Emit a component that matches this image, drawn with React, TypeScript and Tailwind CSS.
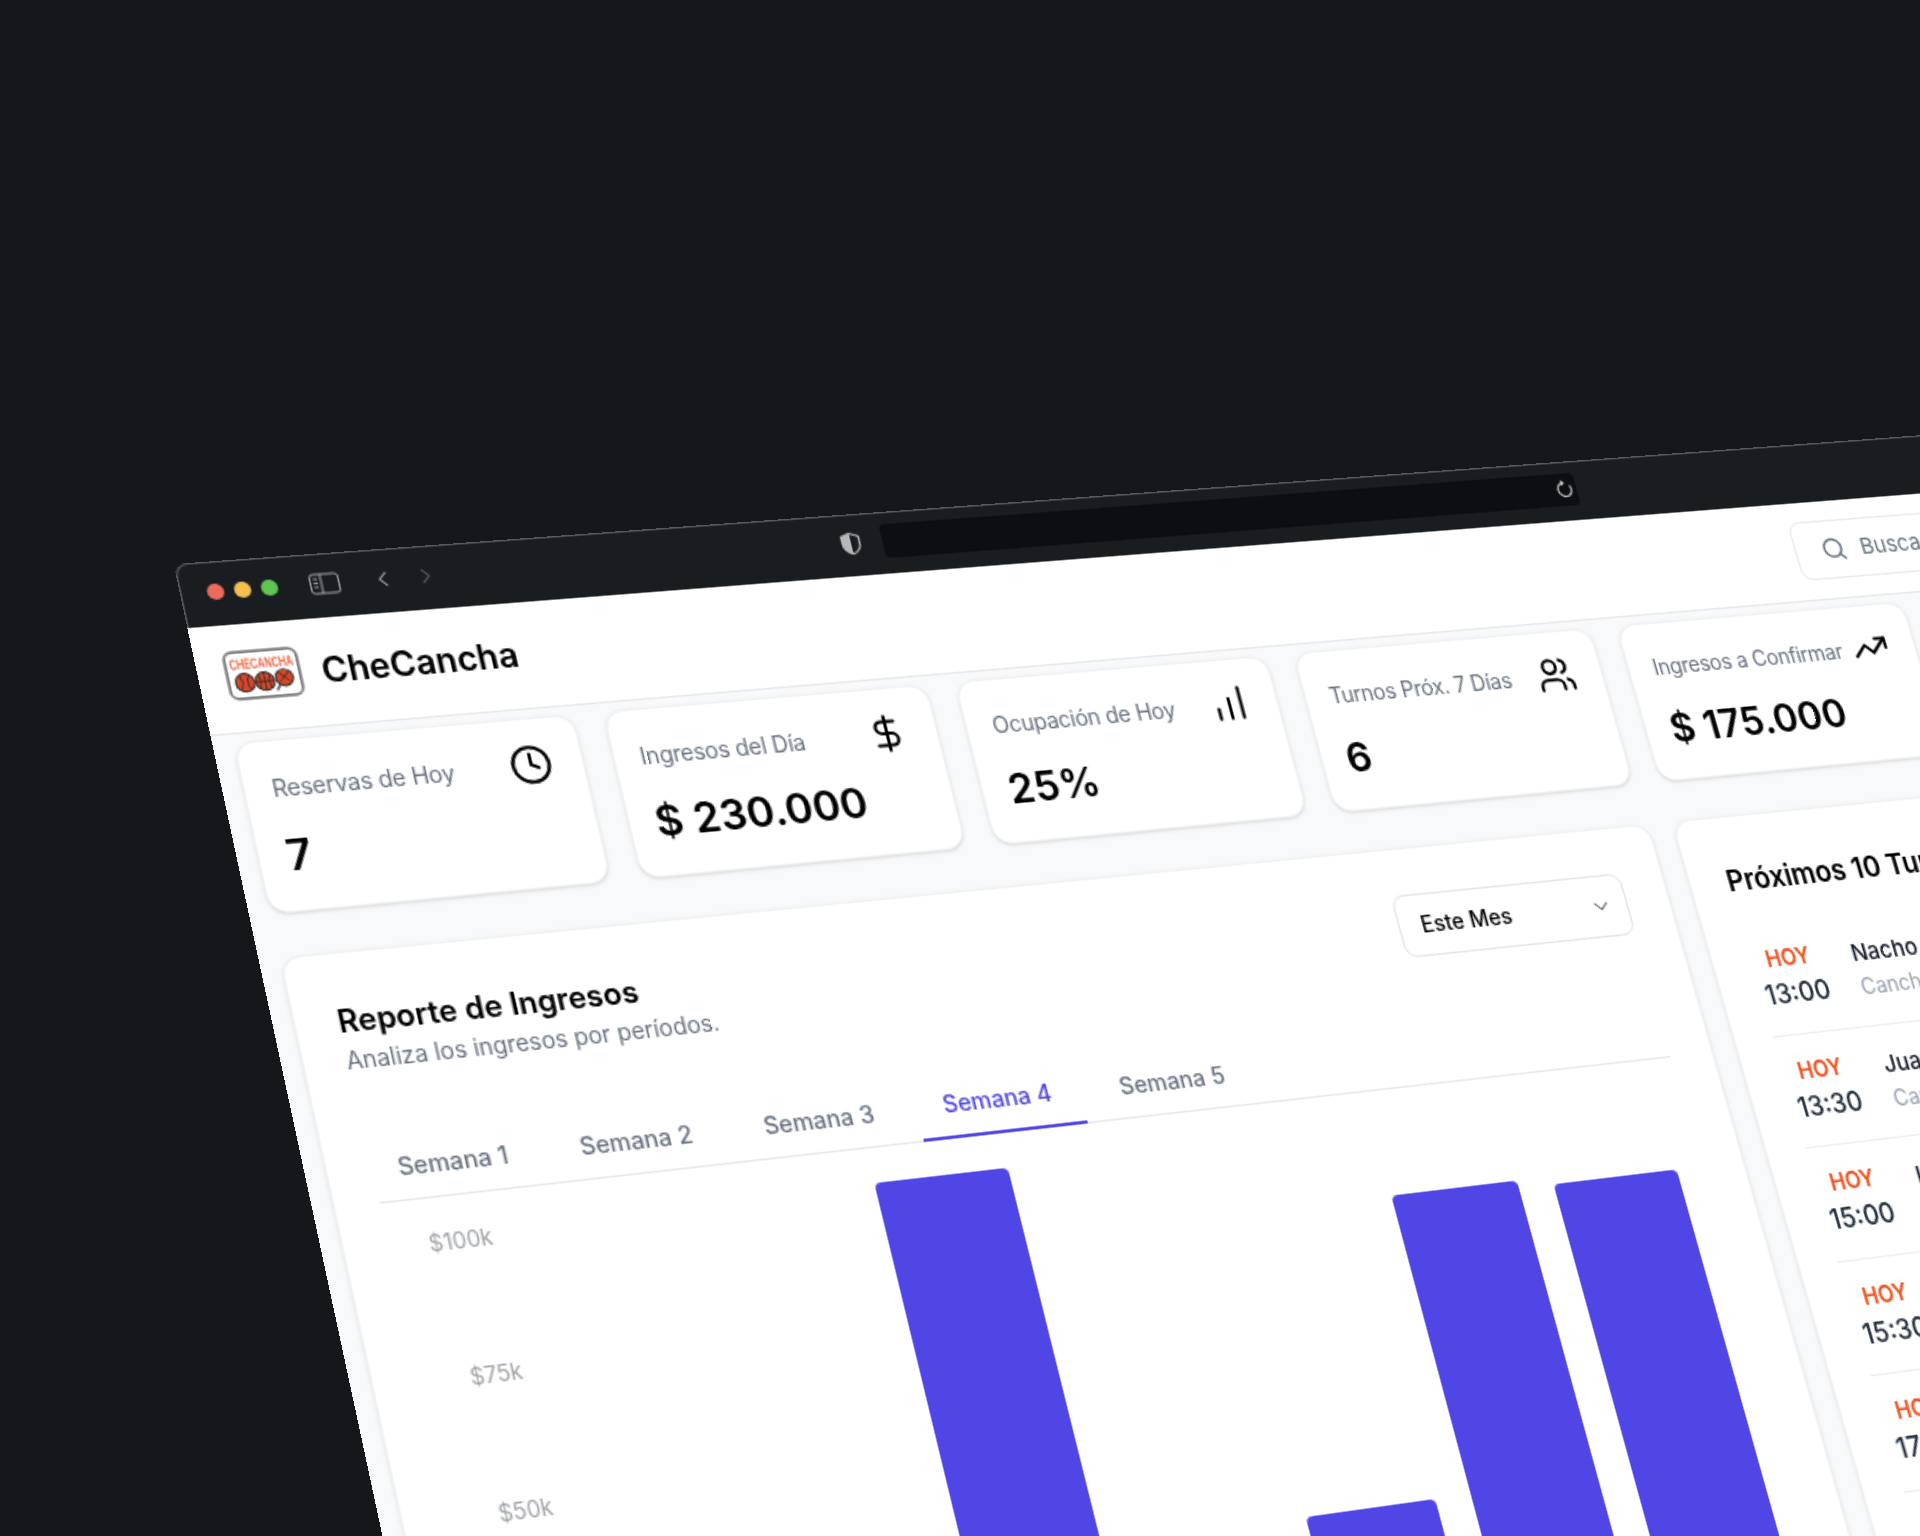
import {
    ChartNoAxesColumnIncreasing,
    ChevronDown,
    ChevronLeft,
    ChevronRight,
    Clock,
    DollarSign,
    Search,
    TrendingUp,
    Users,
} from "lucide-react"

// flat window coordinates -> screenshot coordinates (thumbnail px * 1.2245)
const SCALE = 1920 / 1568
const QUAD = [
    { from: [0, 40], to: [153, 513] },
    { from: [880, 40], to: [1273.6, 425.9] },
    { from: [0, 392], to: [255.1, 988] },
    { from: [880, 392], to: [1396.3, 858.6] },
]

function perspectiveMatrix() {
    const rows: number[][] = []
    QUAD.forEach(({ from: [x, y], to }) => {
        const u = to[0] * SCALE
        const v = to[1] * SCALE
        rows.push([x, y, 1, 0, 0, 0, -u * x, -u * y, u])
        rows.push([0, 0, 0, x, y, 1, -v * x, -v * y, v])
    })
    for (let i = 0; i < 8; i++) {
        let pivot = i
        for (let r = i + 1; r < 8; r++) {
            if (Math.abs(rows[r][i]) > Math.abs(rows[pivot][i])) pivot = r
        }
        ;[rows[i], rows[pivot]] = [rows[pivot], rows[i]]
        for (let r = 0; r < 8; r++) {
            if (r === i) continue
            const k = rows[r][i] / rows[i][i]
            for (let c = i; c < 9; c++) rows[r][c] -= k * rows[i][c]
        }
    }
    const h = rows.map((row, i) => row[8] / row[i])
    return `matrix3d(${h[0]},${h[3]},0,${h[6]},${h[1]},${h[4]},0,${h[7]},0,0,1,0,${h[2]},${h[5]},0,1)`
}

const stats = [
    { label: "Reservas de Hoy", value: "7", icon: Clock },
    { label: "Ingresos del Día", value: "$ 230.000", icon: DollarSign },
    { label: "Ocupación de Hoy", value: "25%", icon: ChartNoAxesColumnIncreasing },
    { label: "Turnos Próx. 7 Días", value: "6", icon: Users },
    { label: "Ingresos a Confirmar", value: "$ 175.000", icon: TrendingUp },
]

const tabs = ["Semana 1", "Semana 2", "Semana 3", "Semana 4", "Semana 5"]
const axis = ["$100k", "$75k", "$50k", "$25k", "$0k"]
const bars = [0, 0, 341, 0, 113, 297, 292]

const turnos = [
    { time: "13:00", name: "Nacho Gómez", court: "Cancha 1" },
    { time: "13:30", name: "Juan Pérez", court: "Cancha 2" },
    { time: "15:00", name: "Lucas Díaz", court: "Cancha 1" },
    { time: "15:30", name: "Martín Ruiz", court: "Cancha 3" },
    { time: "17:00", name: "Pablo Sosa", court: "Cancha 2" },
    { time: "18:00", name: "Diego Paz", court: "Cancha 1" },
]

function Logo() {
    return (
        <svg className="-mt-[3px]" width="45" height="31" viewBox="0 0 48 33">
            <rect x="1.2" y="1.2" width="45.6" height="30.6" rx="5" fill="#fff" stroke="#7c7c7c" strokeWidth="1.8" />
            <text x="24" y="12.5" textAnchor="middle" fontSize="9.5" fontWeight="700" fill="#f1633f" fontFamily="Liberation Sans, sans-serif" textLength="40" lengthAdjust="spacingAndGlyphs">
                CHECANCHA
            </text>
            <circle cx="11.5" cy="21.5" r="6" fill="#d9472a" stroke="#2a2a2a" strokeWidth="1" />
            <path d="M8.5 17c2 3 2 6 0 9M14.5 17c-2 3-2 6 0 9" fill="none" stroke="#2a2a2a" strokeWidth="0.7" />
            <circle cx="24" cy="21.5" r="6" fill="#d9472a" stroke="#2a2a2a" strokeWidth="1" />
            <path d="M24 15.5v12M18 21.5h12M20 17c2 3 2 6 0 9M28 17c-2 3-2 6 0 9" fill="none" stroke="#2a2a2a" strokeWidth="0.7" />
            <circle cx="36.5" cy="20" r="5.5" fill="#d9472a" stroke="#2a2a2a" strokeWidth="1" />
            <path d="M33.5 16.5l6 6M39.5 16.5l-6 6" fill="none" stroke="#2a2a2a" strokeWidth="0.7" />
            <path d="M33 24.5l-2.5 3.5" fill="none" stroke="#555" strokeWidth="1.4" />
        </svg>
    )
}

function BrowserBar() {
    return (
        <div className="flex h-10 items-center rounded-t-[8px] border-l border-t border-[#55585c] bg-[#1a1d20] pb-1 pl-[15px]">
            <div className="flex w-[43px] gap-1.5">
                <span className="h-2.5 w-2.5 rounded-full bg-[#ec6a5e]" />
                <span className="h-2.5 w-2.5 rounded-full bg-[#f4bf4f]" />
                <span className="h-2.5 w-2.5 rounded-full bg-[#61c554]" />
            </div>
            <svg className="ml-[18px]" width="18" height="14" viewBox="0 0 18 14" fill="none" stroke="#9a9da0" strokeWidth="1">
                <rect x="0.5" y="1" width="17" height="12" rx="2" />
                <path d="M7 1v12M2.5 4h2.5M2.5 6.5h2.5M2.5 9h2.5" />
            </svg>
            <ChevronLeft className="ml-[18px] text-[#b4b6b8]" size={16} strokeWidth={1.5} />
            <ChevronRight className="ml-2.5 text-[#64676a]" size={16} strokeWidth={1.5} />
            <svg className="ml-[249px]" width="16" height="16" viewBox="0 0 16 16">
                <path d="M8 1.5l5.5 2v4.5c0 3.4-2.4 5.7-5.5 6.7C4.9 13.7 2.5 11.4 2.5 8V3.5z" fill="none" stroke="#b6b8ba" strokeWidth="1.2" />
                <path d="M8 1.5v13.2C4.9 13.7 2.5 11.4 2.5 8V3.5z" fill="#b6b8ba" />
            </svg>
            <div className="ml-3 flex h-[22px] w-[466px] items-center justify-end rounded-[4px] bg-[#0c0f11] pr-0.5">
                <svg width="13" height="13" viewBox="0 0 13 13" fill="none" stroke="#c5c7c9" strokeWidth="1.1">
                    <path d="M10.6 4.4A4.6 4.6 0 1 1 6.5 2.3" />
                    <path d="M5 .8l1.7 1.5L5 3.8" />
                </svg>
            </div>
        </div>
    )
}

function StatCard({ label, value, icon: Icon }: (typeof stats)[number]) {
    return (
        <div className="h-[105px] rounded-xl border border-[#f0f1f3] bg-white pl-4 pr-[18px] pt-[17px] shadow-sm">
            <div className="flex h-6 items-center justify-between">
                <span className="whitespace-nowrap text-sm tracking-[-0.25px] text-gray-500">{label}</span>
                <Icon className="-mt-[3px] shrink-0 text-black" size={26} strokeWidth={1.9} />
            </div>
            <p className="mt-[13px] text-[26px] font-semibold leading-8 text-black">{value}</p>
        </div>
    )
}

function IncomeReport() {
    return (
        <div className="h-[700px] w-[870px] shrink-0 rounded-xl border border-[#f0f1f3] bg-white pl-[24.5px] pr-7 pt-7 shadow-sm">
            <div className="flex items-start justify-between">
                <div>
                    <h2 className="text-[18.4px] font-semibold leading-6 text-black">Reporte de Ingresos</h2>
                    <p className="mt-0.5 text-[13.9px] leading-5 text-gray-500">Analiza los ingresos por períodos.</p>
                </div>
                <div className="mt-px flex h-10 w-[155px] items-center justify-between rounded-lg border border-[#e3e4ea] pl-3.5 pr-[9px] text-sm font-medium text-black">
                    Este Mes
                    <ChevronDown className="text-gray-600" size={16} strokeWidth={1.5} />
                </div>
            </div>
            <div className="ml-px mt-[35px] h-10 border-b border-[#e5e7eb]">
                <div className="-ml-1.5 flex gap-2">
                    {tabs.map((tab, i) => (
                        <div
                            key={tab}
                            className={
                                i === 3
                                    ? "flex h-10 w-[103px] items-center justify-center border-b-2 border-[#4f46e5] text-[14.25px] font-medium text-[#4f46e5]"
                                    : i === 0
                                      ? "flex h-10 w-[103px] items-center justify-center pl-1 text-[14.25px] font-medium text-gray-500"
                                      : "flex h-10 w-[103px] items-center justify-center text-[14.25px] font-medium text-gray-500"
                            }
                        >
                            {tab}
                        </div>
                    ))}
                </div>
            </div>
            <div className="flex">
                <div className="mt-4 flex h-[336px] w-[65.5px] flex-col justify-between pr-1 text-right text-[13px] leading-5 text-[#9fa2a8]">
                    {axis.map((tick) => (
                        <span key={tick}>{tick}</span>
                    ))}
                </div>
                <div className="ml-1 flex h-[362px] w-[740px] items-end">
                    {bars.map((height, i) => (
                        <div key={i} className="flex flex-1 justify-center">
                            <div className="w-[83px] rounded-t-[4px] bg-[#4f46e5]" style={{ height }} />
                        </div>
                    ))}
                </div>
            </div>
        </div>
    )
}

function NextTurnos() {
    return (
        <div className="h-[700px] flex-1 overflow-hidden rounded-xl border border-[#f0f1f3] bg-white pl-[25px] pt-[26.5px] shadow-sm">
            <h3 className="mb-[16.5px] whitespace-nowrap text-[18.5px] font-semibold leading-7 text-black">Próximos 10 Turnos</h3>
            <div className="ml-[0.5px]">
                {turnos.map((t) => (
                    <div key={t.time} className="flex h-[72.5px] border-b border-[#eceef1] pl-[3px] pt-[13px]">
                        <div className="w-[46px] shrink-0 text-center">
                            <p className="text-sm font-semibold leading-5 text-[#ef4f1c]">HOY</p>
                            <p className="mt-px text-[17px] font-medium leading-6 text-gray-800">{t.time}</p>
                        </div>
                        <div className="ml-[21px] whitespace-nowrap pt-0.5">
                            <p className="text-[15px] font-medium leading-5 text-gray-900">{t.name}</p>
                            <p className="text-sm leading-6 text-gray-400">{t.court}</p>
                        </div>
                    </div>
                ))}
            </div>
        </div>
    )
}

export default function App() {
    return (
        <div className="relative h-[1536px] w-[1920px] overflow-hidden bg-[#16171a] font-['Inter',sans-serif]">
            <div className="absolute left-0 top-0 w-[1240px] origin-top-left" style={{ transform: perspectiveMatrix() }}>
                <BrowserBar />
                <div className="h-[1000px] bg-[#f8f9fb]">
                    <header className="flex h-[67px] items-center border-b border-[#e5e7eb] bg-white pl-4">
                        <Logo />
                        <span className="ml-3 text-[21px] font-semibold text-black">CheCancha</span>
                        <div className="ml-auto mr-[43px] flex h-10 w-[160px] items-center gap-2.5 rounded-lg border border-[#e8e9ee] pl-[18px] text-[15px] text-gray-500">
                            <Search size={18} />
                            Buscar...
                        </div>
                    </header>
                    <main className="w-[1114px] px-3 pt-[5px]">
                        <div className="grid grid-cols-5 gap-[18px]">
                            {stats.map((stat) => (
                                <StatCard key={stat.label} {...stat} />
                            ))}
                        </div>
                        <div className="mt-[26px] flex gap-4">
                            <IncomeReport />
                            <NextTurnos />
                        </div>
                    </main>
                </div>
            </div>
        </div>
    )
}
